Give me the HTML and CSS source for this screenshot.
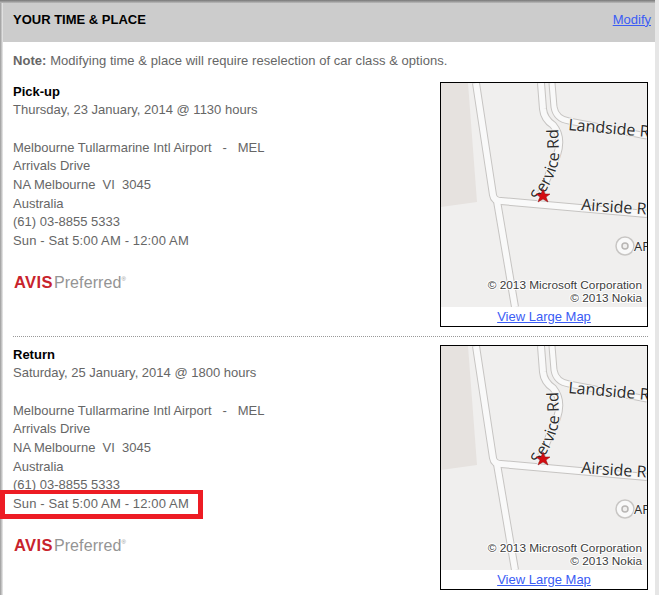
FILE: index.html
```html
<!DOCTYPE html>
<html lang="en">

<head>
    <meta charset="UTF-8">
    <title>Your Time &amp; Place</title>
    <link rel="stylesheet" href="styles.css">
</head>

<body>
    <svg class="map-defs" width="0" height="0">
        <symbol id="map" viewBox="0 0 206 224">
            <rect width="206" height="224" fill="#f0efee" />
            <polygon points="0,0 27,0 36,119 0,124" fill="#e6e2df" />
            <g fill="none" stroke="#c6c4c2" stroke-width="8">
                <path d="M35 0 L52 112 Q53 118 60 118 L206 131" />
                <path d="M56 118 L74 224" />
                <path d="M100 0 L102 26 Q103 36 112 42 Q122 54 116 72 L100 110" />
                <path d="M111 0 L113 24 Q115 36 128 38 L206 53" stroke-width="7" />
            </g>
            <g fill="none" stroke="#f9f9f9" stroke-width="6">
                <path d="M35 0 L52 112 Q53 118 60 118 L206 131" />
                <path d="M56 118 L74 224" />
                <path d="M100 0 L102 26 Q103 36 112 42 Q122 54 116 72 L100 110" />
                <path d="M111 0 L113 24 Q115 36 128 38 L206 53" stroke-width="5" />
            </g>
            <path id="service-line" d="M97 121 L104 109 Q118 88 118 70 L117 40" fill="none" />
            <circle cx="184" cy="163" r="9" fill="#f9f9f9" stroke="#c8c6c4" stroke-width="1.5" />
            <circle cx="184" cy="163" r="3" fill="#f0efee" stroke="#b8b6b4" stroke-width="1.5" />
            <g class="map-label">
                <text transform="translate(127 47) rotate(5)">Landside Rd</text>
                <text transform="translate(140 127) rotate(4)">Airside Rd</text>
                <text><textPath href="#service-line" startOffset="3">Service Rd</textPath></text>
                <text class="map-label-small" x="193" y="168">AP</text>
            </g>
            <polygon points="102,106 104,111 109,111 105,114 107,119 102,116 97,119 99,114 95,111 100,111" fill="#d40d12" stroke="#8a1014" stroke-width="0.5" />
            <g class="map-copy">
                <text x="201" y="206">© 2013 Microsoft Corporation</text>
                <text x="201" y="219">© 2013 Nokia</text>
            </g>
        </symbol>
    </svg>

    <div class="panel">
        <div class="panel-head">
            <h2>YOUR TIME &amp; PLACE</h2>
            <a href="#">Modify</a>
        </div>

        <p class="note"><b>Note:</b> Modifying time &amp; place will require reselection of car class &amp; options.</p>

        <!-- Pick-up -->
        <div class="location">
            <div class="details">
                <h3>Pick-up</h3>
                <p>Thursday, 23 January, 2014 @ 1130 hours</p>
                <address>
                    <p>Melbourne Tullarmarine Intl Airport &nbsp; - &nbsp; MEL</p>
                    <p>Arrivals Drive</p>
                    <p>NA Melbourne &nbsp;VI &nbsp;3045</p>
                    <p>Australia</p>
                    <p>(61) 03-8855 5333</p>
                    <p class="hours">Sun - Sat 5:00 AM - 12:00 AM</p>
                </address>
                <div class="brand"><span class="brand-avis">AVIS</span><span class="brand-pref">Preferred</span><sup class="brand-reg">®</sup></div>
            </div>
            <div class="map-box">
                <svg class="map" width="206" height="224"><use href="#map" /></svg>
                <a href="#">View Large Map</a>
            </div>
        </div>

        <div class="divider"></div>

        <!-- Return -->
        <div class="location">
            <div class="details">
                <h3>Return</h3>
                <p>Saturday, 25 January, 2014 @ 1800 hours</p>
                <address>
                    <p>Melbourne Tullarmarine Intl Airport &nbsp; - &nbsp; MEL</p>
                    <p>Arrivals Drive</p>
                    <p>NA Melbourne &nbsp;VI &nbsp;3045</p>
                    <p>Australia</p>
                    <p>(61) 03-8855 5333</p>
                    <p class="hours marked">Sun - Sat 5:00 AM - 12:00 AM</p>
                </address>
                <div class="brand"><span class="brand-avis">AVIS</span><span class="brand-pref">Preferred</span><sup class="brand-reg">®</sup></div>
            </div>
            <div class="map-box">
                <svg class="map" width="206" height="224"><use href="#map" /></svg>
                <a href="#">View Large Map</a>
            </div>
        </div>
    </div>
</body>

</html>
```

FILE: styles.css
```css
body {
    margin: 0;
    font-family: 'Liberation Sans', Arial, sans-serif;
    font-size: 13px;
    color: #666;
    background-color: #fff;
    overflow: hidden;
}

h2,
h3,
p,
address {
    margin: 0;
    font-style: normal;
}

a {
    color: #3a5cf5;
}

.map-defs {
    position: absolute;
}

.panel {
    height: 595px;
    box-sizing: border-box;
    padding-top: 3px;
    border-right: 4px solid #e6e6e6;
    background:
        linear-gradient(to bottom, #777, #bbb) top / 100% 3px no-repeat,
        linear-gradient(to right, #999, #ccc 60%, #eee) left / 3px 100% no-repeat,
        #fff;
}

.panel-head {
    display: flex;
    justify-content: space-between;
    align-items: center;
    height: 39px;
    margin-left: 3px;
    padding: 0 4px 7px 10px;
    box-sizing: border-box;
    background-color: #ccc;
}

.panel-head h2 {
    font-size: 13px;
    color: #000;
}

.note {
    margin: 10px 0 12px 13px;
    line-height: 18px;
    letter-spacing: 0.05px;
}

.location {
    display: flex;
    justify-content: space-between;
    margin: 0 7px 0 13px;
}

.details {
    padding-top: 1px;
}

.details h3 {
    font-size: 13px;
    line-height: 18px;
    color: #000;
}

.details p {
    line-height: 18.67px;
}

.details address {
    margin-top: 19px;
}

.details .hours {
    letter-spacing: 0.14px;
}

.marked {
    position: relative;
}

/* Recuadro rojo sobre el horario */
.marked::after {
    content: "";
    position: absolute;
    top: -5px;
    bottom: -5px;
    left: -13px;
    width: 193px;
    border: 5px solid #ed1c24;
    border-top-width: 4px;
}

.brand {
    margin-top: 21px;
    display: flex;
    align-items: baseline;
    line-height: 20px;
    padding-left: 1px;
}

.brand-avis {
    font-size: 16.5px;
    font-weight: bold;
    letter-spacing: 0.4px;
    color: #c8232c;
}

.brand-pref {
    font-size: 16px;
    letter-spacing: 0.1px;
    color: #949494;
    margin-left: 1px;
}

.brand-reg {
    font-size: 6px;
    line-height: 6px;
    color: #949494;
    align-self: flex-start;
    margin-top: 4px;
}

.map-box {
    width: 206px;
    height: 243px;
    border: 1px solid #000;
    text-align: center;
    line-height: 19px;
}

.map {
    display: block;
}

.map-label text {
    font-family: 'Open Sans', sans-serif;
    font-size: 16px;
    fill: #2c2c2c;
    paint-order: stroke;
    stroke: #f4f4f4;
    stroke-width: 2px;
}

.map-label .map-label-small {
    font-size: 13px;
}

.map-copy text {
    font-family: 'Liberation Sans', Arial, sans-serif;
    font-size: 11.8px;
    text-anchor: end;
    fill: #3c3c3c;
    paint-order: stroke;
    stroke: #fff;
    stroke-width: 2px;
}

.divider {
    height: 0;
    margin: 9px 7px 8px 13px;
    border-top: 1px dotted #999;
}
```
